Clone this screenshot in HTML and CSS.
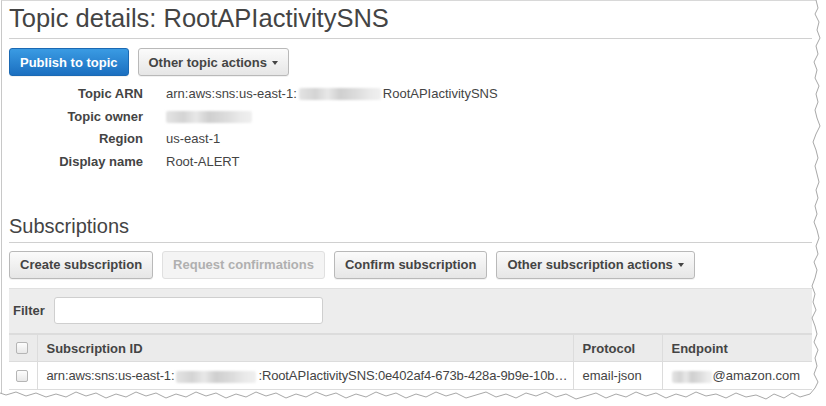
FILE: index.html
```html
<!DOCTYPE html>
<html>
<head>
<meta charset="utf-8">
<link rel="stylesheet" href="styles.css">
</head>
<body>
<div class="page">
  <h1 class="title">Topic details: RootAPIactivitySNS</h1>
  <div class="toolbar">
    <button class="btn btn-primary">Publish to topic</button>
    <button class="btn">Other topic actions <span class="caret"></span></button>
  </div>
  <div class="details">
    <div class="label">Topic ARN</div>
    <div class="value">arn:aws:sns:us-east-1:<span class="blur blur-arn"></span>RootAPIactivitySNS</div>
    <div class="label">Topic owner</div>
    <div class="value"><span class="blur blur-owner"></span></div>
    <div class="label">Region</div>
    <div class="value">us-east-1</div>
    <div class="label">Display name</div>
    <div class="value">Root-ALERT</div>
  </div>

  <h2 class="subtitle">Subscriptions</h2>
  <div class="toolbar toolbar-sub">
    <button class="btn">Create subscription</button>
    <button class="btn btn-disabled">Request confirmations</button>
    <button class="btn">Confirm subscription</button>
    <button class="btn">Other subscription actions <span class="caret"></span></button>
  </div>
  <div class="filter-panel">
    <span class="filter-label">Filter</span>
    <span class="filter-input"></span>
  </div>
  <table class="grid">
    <colgroup>
      <col class="c-check">
      <col class="c-id">
      <col class="c-proto">
      <col class="c-end">
    </colgroup>
    <thead>
      <tr>
        <th class="col-check"><span class="checkbox"></span></th>
        <th class="col-id">Subscription ID</th>
        <th class="col-proto">Protocol</th>
        <th class="col-end">Endpoint</th>
      </tr>
    </thead>
    <tbody>
      <tr>
        <td class="col-check"><span class="checkbox"></span></td>
        <td class="col-id id-text">arn:aws:sns:us-east-1:<span class="blur blur-id"></span>:RootAPIactivitySNS:0e402af4-673b-428a-9b9e-10b…</td>
        <td class="col-proto">email-json</td>
        <td class="col-end"><span class="blur blur-mail"></span>@amazon.com</td>
      </tr>
    </tbody>
  </table>
</div>
<svg class="torn" width="826" height="406" viewBox="0 0 826 406">
  <path class="torn-fill" d="M816 0 L818 8 L815 14 L819 22 L817 30 L820 38 L816 46 L818 54 L814 62 L817 70 L815 78 L819 86 L816 94 L818 102 L815 110 L817 118 L820 126 L816 134 L813 142 L816 150 L818 158 L815 166 L817 174 L819 182 L816 190 L818 198 L815 206 L817 214 L814 222 L817 230 L819 238 L816 246 L818 254 L814 262 L817 270 L815 278 L812 286 L815 294 L813 302 L816 310 L812 318 L815 326 L817 334 L814 342 L818 350 L815 358 L817 366 L814 374 L818 382 L815 388 L810 394 L800 397 L792 393 L784 398 L774 394 L766 399 L756 395 L746 397 L736 393 L726 398 L716 394 L706 396 L696 392 L686 397 L676 394 L666 398 L656 393 L646 396 L636 392 L626 397 L616 394 L606 398 L596 393 L586 396 L576 399 L566 394 L556 397 L546 392 L536 396 L526 393 L516 398 L506 394 L496 397 L486 392 L476 395 L466 398 L456 393 L446 396 L436 392 L426 397 L416 394 L406 398 L396 393 L386 396 L376 392 L366 397 L356 394 L346 398 L336 393 L326 396 L316 392 L306 397 L296 394 L286 398 L276 393 L266 396 L256 392 L246 397 L236 394 L226 398 L216 393 L206 396 L196 392 L186 397 L176 394 L166 398 L156 393 L146 396 L136 392 L126 397 L116 394 L106 398 L96 393 L86 396 L76 392 L66 397 L56 394 L46 397 L36 393 L26 396 L16 392 L6 395 L0 393 L0 406 L826 406 L826 0 Z"/>
  <path class="torn-line" d="M816 0 L818 8 L815 14 L819 22 L817 30 L820 38 L816 46 L818 54 L814 62 L817 70 L815 78 L819 86 L816 94 L818 102 L815 110 L817 118 L820 126 L816 134 L813 142 L816 150 L818 158 L815 166 L817 174 L819 182 L816 190 L818 198 L815 206 L817 214 L814 222 L817 230 L819 238 L816 246 L818 254 L814 262 L817 270 L815 278 L812 286 L815 294 L813 302 L816 310 L812 318 L815 326 L817 334 L814 342 L818 350 L815 358 L817 366 L814 374 L818 382 L815 388 L810 394 L800 397 L792 393 L784 398 L774 394 L766 399 L756 395 L746 397 L736 393 L726 398 L716 394 L706 396 L696 392 L686 397 L676 394 L666 398 L656 393 L646 396 L636 392 L626 397 L616 394 L606 398 L596 393 L586 396 L576 399 L566 394 L556 397 L546 392 L536 396 L526 393 L516 398 L506 394 L496 397 L486 392 L476 395 L466 398 L456 393 L446 396 L436 392 L426 397 L416 394 L406 398 L396 393 L386 396 L376 392 L366 397 L356 394 L346 398 L336 393 L326 396 L316 392 L306 397 L296 394 L286 398 L276 393 L266 396 L256 392 L246 397 L236 394 L226 398 L216 393 L206 396 L196 392 L186 397 L176 394 L166 398 L156 393 L146 396 L136 392 L126 397 L116 394 L106 398 L96 393 L86 396 L76 392 L66 397 L56 394 L46 397 L36 393 L26 396 L16 392 L6 395 L0 393"/>
</svg>
</body>
</html>
```

FILE: styles.css
```css
* { box-sizing: border-box; }
html, body { margin: 0; padding: 0; background: #fff; }
body {
  width: 826px;
  height: 406px;
  overflow: hidden;
  position: relative;
  font-family: "Liberation Sans", Arial, Helvetica, sans-serif;
  color: #444;
}
.page {
  margin-left: 1px;
  border-left: 1px solid #c8c8c8;
  border-top: 1px solid #d8d8d8;
  height: 406px;
  padding: 0 14px 0 7px;
}
.title {
  margin: 0;
  padding: 3px 0 5px 0;
  font-size: 25.5px;
  font-weight: normal;
  line-height: 29px;
  color: #444;
  border-bottom: 1px solid #d0d0d0;
}
.toolbar {
  display: flex;
  gap: 9px;
  margin-top: 9px;
}
.btn {
  font-family: inherit;
  font-size: 13px;
  font-weight: bold;
  color: #444;
  height: 28px;
  padding: 0 10px;
  border: 1px solid #b9b9b9;
  border-radius: 3px;
  background: linear-gradient(#fbfbfb, #e6e6e6);
  display: inline-flex;
  align-items: center;
  gap: 5px;
  box-shadow: 0 1px 0 rgba(0,0,0,0.05);
}
.btn-primary {
  color: #fff;
  background: linear-gradient(#3a9be3, #1b6fc0);
  border-color: #1b69b3;
}
.btn-disabled {
  color: #b0b0b0;
  background: #f4f4f4;
  border-color: #e0e0e0;
  box-shadow: none;
}
.caret {
  display: inline-block;
  width: 0;
  height: 0;
  border-left: 3px solid transparent;
  border-right: 3px solid transparent;
  border-top: 4px solid #444;
  margin-top: 1px;
}
.details {
  display: grid;
  grid-template-columns: 134px auto;
  column-gap: 23px;
  margin-top: 7px;
  font-size: 13px;
  line-height: 22.7px;
}
.details .label {
  font-weight: bold;
  text-align: right;
}
.details .value {
  display: flex;
  align-items: center;
  height: 22.7px;
}
.blur {
  display: inline-block;
  height: 12px;
  border-radius: 2px;
  filter: blur(1.2px);
  background: linear-gradient(90deg, #e4e4e4 0%, #d4d4d4 20%, #e8e8e8 35%, #cfcfcf 50%, #dcdcdc 70%, #e9e9e9 85%, #f0f0f0 100%);
}
.blur-arn { width: 82px; margin: 0 2px; }
.blur-owner { width: 86px; }
.blur-id { width: 80px; margin: 0 2px; vertical-align: middle; }
.blur-mail { width: 40px; margin-right: 1px; }
.subtitle {
  margin: 40px 0 0 0;
  padding-bottom: 4px;
  font-size: 20px;
  font-weight: normal;
  line-height: 24px;
  color: #444;
  border-bottom: 1px solid #d0d0d0;
}
.toolbar-sub { margin-top: 8px; }
.filter-panel {
  margin-top: 9px;
  background: #ededed;
  border-top: 1px solid #e0e0e0;
  height: 45px;
  display: flex;
  align-items: center;
  gap: 9px;
  padding-left: 4px;
}
.filter-label {
  font-size: 13px;
  font-weight: bold;
  color: #444;
}
.filter-input {
  display: block;
  width: 269px;
  height: 27px;
  background: #fff;
  border: 1px solid #cfcfcf;
  border-radius: 3px;
}
.grid {
  width: 803px;
  table-layout: fixed;
  border-collapse: collapse;
  font-size: 13px;
  color: #444;
}
.c-check { width: 28px; }
.c-id { width: 536px; }
.c-proto { width: 89px; }
.c-end { width: 150px; }
.grid th, .grid td {
  height: 28px;
  padding: 0 0 0 9px;
  text-align: left;
  border-top: 1px solid #dcdcdc;
  border-bottom: 1px solid #dcdcdc;
  border-right: 1px solid #dcdcdc;
  white-space: nowrap;
}
.grid th {
  background: #ebebeb;
  font-weight: bold;
  border-top: 2px solid #dcdcdc;
}
.grid td { background: #fff; }
.grid td.id-text { letter-spacing: -0.13px; padding-left: 9px; }
.grid .col-check { padding: 0 0 0 7px; border-left: none; }
.grid .col-end { border-right: none; }
.grid td.col-end .blur { vertical-align: middle; }
.checkbox {
  display: block;
  width: 12px;
  height: 12px;
  border: 1px solid #b5b5b5;
  border-radius: 2px;
  background: linear-gradient(#fdfdfd, #e8e8e8);
}
.torn {
  position: absolute;
  left: 0;
  top: 0;
  pointer-events: none;
}
.torn-fill { fill: #fff; }
.torn-line { fill: none; stroke: #a8a8a8; stroke-width: 1; }
```
